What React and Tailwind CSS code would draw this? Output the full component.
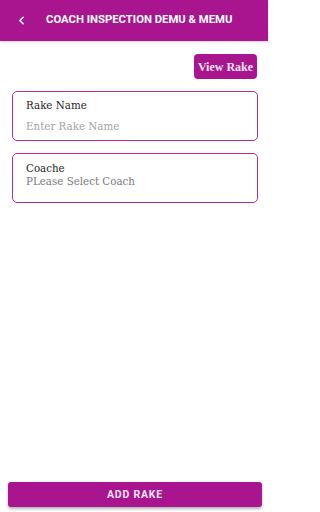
import { ChevronLeft } from 'lucide-react'

const serif = { fontFamily: '"DejaVu Serif", "Liberation Serif", serif' }

export default function App() {
  return (
    <div className="w-[288px] h-[512px] bg-white font-['Roboto',sans-serif]">
      <div className="w-[268px] h-[512px] flex flex-col">
        <header className="h-[41px] shrink-0 bg-[#a8158f] flex items-center shadow-[0_1px_2px_rgba(0,0,0,0.2)]">
          <ChevronLeft className="ml-[15px] w-[13px] h-[13px] text-white" strokeWidth={3} />
          <h1 className="ml-[18px] text-white text-[11.3px] font-bold">
            COACH INSPECTION DEMU &amp; MEMU
          </h1>
        </header>

        <div className="flex justify-end mt-[13px] mr-[11px]">
          <button
            type="button"
            className="w-[63px] h-[25px] rounded-[4px] bg-[#a8158f] text-[#f3e6f0] text-[12px] font-bold"
            style={{ fontFamily: '"Liberation Serif", serif' }}
          >
            View Rake
          </button>
        </div>

        <div className="ml-[12px] mr-[10px] mt-[12px] h-[50px] border-[1.5px] border-[#b42c9b] rounded-[5px] px-[13px] pt-[6px]" style={serif}>
          <p className="text-[10.3px] leading-[14px] text-[#1f1f1f]">Rake Name</p>
          <p className="mt-[7px] text-[10.3px] leading-[14px] text-[#a3a3a3]">Enter Rake Name</p>
        </div>

        <div className="ml-[12px] mr-[10px] mt-[12px] h-[50px] border-[1.5px] border-[#b42c9b] rounded-[5px] px-[13px] pt-[7px]" style={serif}>
          <p className="text-[10.3px] leading-[14px] text-[#1f1f1f]">Coache</p>
          <p className="text-[10.3px] leading-[13px] text-[#7a7a7a]">PLease Select Coach</p>
        </div>

        <div className="mt-auto mb-[5px] ml-[8px] mr-[6px]">
          <button
            type="button"
            className="w-full h-[25px] rounded-[3px] bg-[#a8158f] text-[#f3e6f0] text-[10.5px] font-bold tracking-[0.8px] shadow-[0_2px_3px_rgba(0,0,0,0.3)]"
          >
            ADD RAKE
          </button>
        </div>
      </div>
    </div>
  )
}
